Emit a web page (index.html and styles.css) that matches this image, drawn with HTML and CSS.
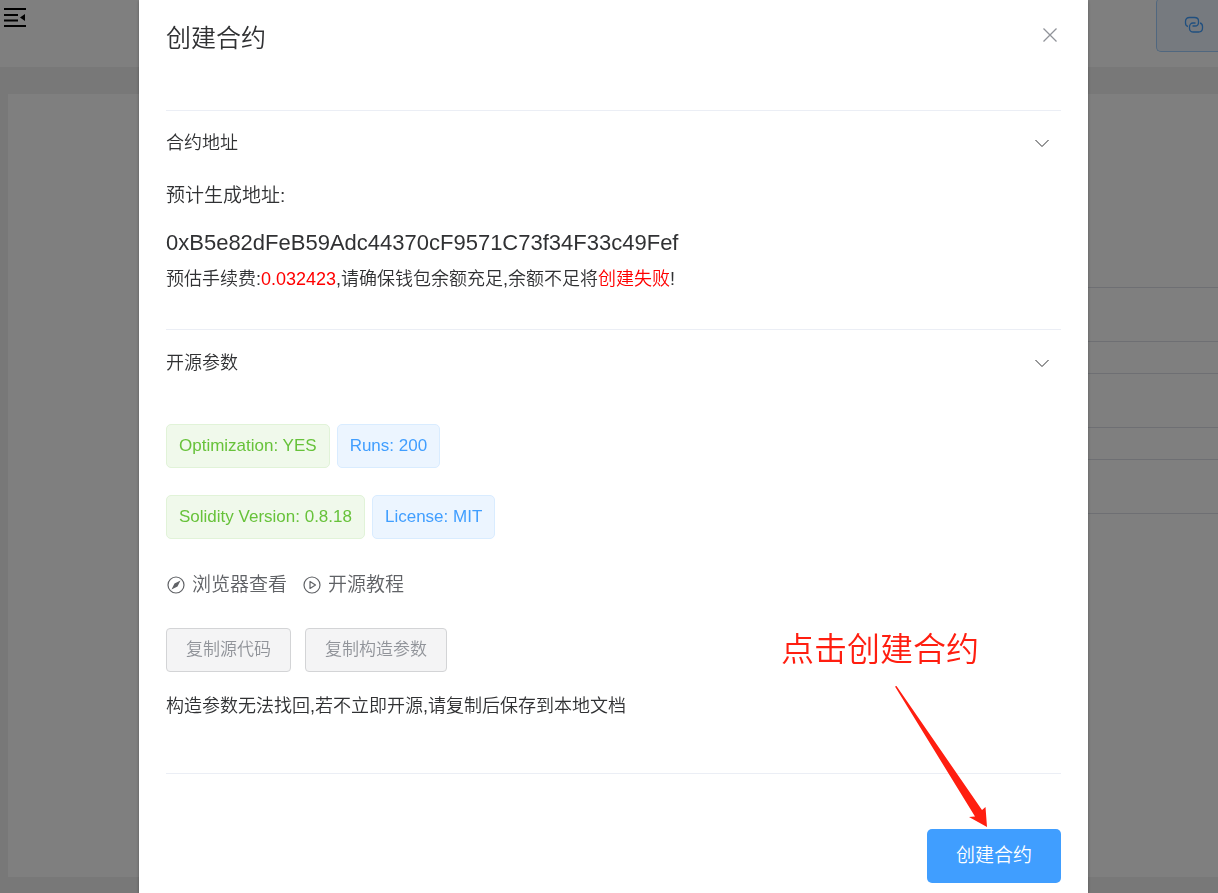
FILE: index.html
```
<!DOCTYPE html>
<html lang="zh-CN">
<head>
    <meta charset="UTF-8">
    <meta name="viewport" content="width=device-width, initial-scale=1.0">
    <title>创建合约</title>
    <link rel="stylesheet" href="styles.css">
</head>
<body>
    <!-- Page behind the dialog -->
    <header class="top-bar">
        <button class="menu-toggle" type="button" aria-label="菜单">
            <svg width="24" height="20" viewBox="0 0 24 20">
                <path d="M1 1h22M1 7h14M1 12.500h14M1 18h22" stroke="#000" stroke-width="2" fill="none"/>
                <path d="M22 6v7l-5-3.500z" fill="#000"/>
            </svg>
        </button>
        <button class="wallet-btn" type="button" aria-label="连接钱包">
            <svg width="20" height="18" viewBox="0 0 20 18" fill="none" stroke="#409eff" stroke-width="1.300">
                <path d="M4 10.500C2 10 1.500 8.500 1.500 7V5.500C1.500 3 3 1.500 5.500 1.500h5C13 1.500 14.500 3 14.500 5v1.500C14.500 9 13 10 11 10H8.500"/>
                <path d="M16 7c2 .5 2.500 2 2.500 3.500V12c0 2.500-1.500 4-4 4h-5C7 16 5.500 14.500 5.500 12.500V11c0-2.500 1.500-4 3.500-4h2.500"/>
            </svg>
        </button>
    </header>
    <main class="content">
        <div class="card">
            <div class="row"></div>
            <div class="row"></div>
            <div class="row"></div>
        </div>
    </main>

    <!-- Create contract dialog -->
    <div class="overlay">
        <div class="dialog" role="dialog" aria-labelledby="dialogTitle">
            <div class="dialog-header">
                <h2 class="dialog-title" id="dialogTitle">创建合约</h2>
                <button class="close-btn" type="button" aria-label="关闭">
                    <svg width="16" height="16" viewBox="0 0 16 16">
                        <path d="M1.500 1.500l13 13M14.500 1.500l-13 13" stroke="#909399" stroke-width="1.300" fill="none"/>
                    </svg>
                </button>
            </div>

            <section class="panel address-panel">
                <button class="panel-header" type="button">
                    合约地址
                    <svg width="16" height="10" viewBox="0 0 16 10">
                        <path d="M1.500 2L8 8.500 14.500 2" stroke="#303133" stroke-width="1" fill="none"/>
                    </svg>
                </button>
                <p class="address-label">预计生成地址:</p>
                <p class="address">0xB5e82dFeB59Adc44370cF9571C73f34F33c49Fef</p>
                <p class="note">预估手续费:<span class="red">0.032423</span>,请确保钱包余额充足,余额不足将<span class="red">创建失败</span>!</p>
            </section>

            <section class="panel source-panel">
                <button class="panel-header" type="button">
                    开源参数
                    <svg width="16" height="10" viewBox="0 0 16 10">
                        <path d="M1.500 2L8 8.500 14.500 2" stroke="#303133" stroke-width="1" fill="none"/>
                    </svg>
                </button>
                <div class="tags">
                    <span class="tag success">Optimization: YES</span>
                    <span class="tag">Runs: 200</span>
                </div>
                <div class="tags">
                    <span class="tag success">Solidity Version: 0.8.18</span>
                    <span class="tag">License: MIT</span>
                </div>
                <div class="links">
                    <a href="#">
                        <svg width="20" height="20" viewBox="0 0 20 20">
                            <circle cx="10" cy="10" r="8" stroke="#606266" stroke-width="1.200" fill="none"/>
                            <path d="M14.500 5.500l-3 6-6 3 3-6z" fill="#606266"/>
                        </svg>
                        浏览器查看
                    </a>
                    <a href="#">
                        <svg width="20" height="20" viewBox="0 0 20 20" stroke="#606266" stroke-width="1.200" fill="none">
                            <circle cx="10" cy="10" r="8"/>
                            <path d="M8 6.500v7l5.500-3.500z" stroke-linejoin="round"/>
                        </svg>
                        开源教程
                    </a>
                </div>
                <div class="copy-buttons">
                    <button class="copy-btn" type="button" disabled>复制源代码</button>
                    <button class="copy-btn" type="button" disabled>复制构造参数</button>
                </div>
                <p class="note">构造参数无法找回,若不立即开源,请复制后保存到本地文档</p>
            </section>

            <div class="dialog-footer">
                <button class="create-btn" type="button">创建合约</button>
                <div class="hint">
                    <span>点击创建合约</span>
                    <svg width="94" height="142" viewBox="0 0 94 142">
                        <path d="M0 0.500L1.500 0 87 124 90.500 121 92 141 74 131 80 130.500z" fill="#ff1e10"/>
                    </svg>
                </div>
            </div>
        </div>
    </div>
</body>
</html>
```
FILE: styles.css
```
* {
    margin: 0;
    padding: 0;
    box-sizing: border-box;
}

body {
    display: flex;
    flex-direction: column;
    height: 100vh;
    overflow: hidden;
    background-color: #f0f0f0;
    color: #303133;
    font-family: "Liberation Sans", "Noto Sans CJK SC", sans-serif;
    font-size: 18px;
    font-weight: 350;
    line-height: 24px;
}

button {
    border: none;
    background: none;
    color: inherit;
    font: inherit;
    cursor: pointer;
}

svg {
    display: block;
    flex-shrink: 0;
}

/* Page behind the dialog */
.top-bar {
    display: flex;
    justify-content: space-between;
    align-items: flex-start;
    height: 67px;
    background-color: #fff;
}

.menu-toggle {
    padding: 8px 3px;
}

.wallet-btn {
    width: 62px;
    height: 54px;
    margin-top: -2px;
    padding-left: 27px;
    background-color: #ecf5ff;
    border: 1px solid #a0cfff;
    border-right: none;
    border-radius: 5px 0 0 5px;
}

.content {
    display: flex;
    flex: 1;
    padding: 27px 0 16px 8px;
}

.card {
    flex: 1;
    padding: 193px 0 0 200px;
    background-color: #fff;
}

.row {
    height: 55px;
    margin-bottom: 31px;
    border: 1px solid #dcdfe6;
    border-right: none;
}

/* Dialog */
.overlay {
    position: fixed;
    inset: 0;
    display: flex;
    padding: 0 130px 0 139px;
    background-color: rgba(0, 0, 0, 0.5);
}

.dialog {
    flex: 1;
    padding: 0 27px;
    background-color: #fff;
    box-shadow: 0 1px 3px rgba(0, 0, 0, 0.3);
}

.dialog-header {
    display: flex;
    justify-content: space-between;
    align-items: flex-start;
    height: 110px;
    padding-top: 22px;
}

.dialog-title {
    font-size: 25px;
    font-weight: 350;
    line-height: 32px;
}

.close-btn {
    padding: 5px 3px;
}

.panel {
    border-top: 1px solid #ebeef5;
}

.panel-header {
    display: flex;
    justify-content: space-between;
    align-items: center;
    width: 100%;
    height: 64px;
    padding-right: 11px;
}

.address-panel {
    padding-bottom: 38px;
}

.address-label {
    padding: 9px 0 11px;
    font-size: 19px;
}

.address {
    padding: 8px 0;
    font-size: 22px;
    font-weight: 400;
    line-height: 32px;
}

.red {
    color: #f00;
}

.source-panel {
    padding-bottom: 55px;
    border-bottom: 1px solid #ebeef5;
}

.source-panel .panel-header {
    height: 66px;
    margin-bottom: 28px;
}

.tags {
    display: flex;
    gap: 7px;
    margin-bottom: 27px;
}

.tag {
    height: 44px;
    padding: 0 12px;
    background-color: #ecf5ff;
    border: 1px solid #d9ecff;
    border-radius: 5px;
    color: #409eff;
    font-size: 17px;
    line-height: 42px;
}

.tag.success {
    background-color: #f0f9eb;
    border-color: #e1f3d8;
    color: #67c23a;
}

.links {
    display: flex;
    gap: 15px;
    margin: 34px 0 31px;
}

.links a {
    display: flex;
    align-items: center;
    gap: 6px;
    color: #606266;
    font-size: 19px;
    text-decoration: none;
}

.copy-buttons {
    display: flex;
    gap: 14px;
    margin-bottom: 22px;
}

.copy-btn {
    height: 44px;
    padding: 0 19px;
    background-color: #f4f4f5;
    border: 1px solid #d3d4d6;
    border-radius: 4px;
    color: #909399;
    font-size: 17px;
    cursor: not-allowed;
}

.dialog-footer {
    position: relative;
    display: flex;
    justify-content: flex-end;
    padding-top: 55px;
}

.create-btn {
    height: 54px;
    padding: 0 29px;
    background-color: #409eff;
    border-radius: 5px;
    color: #fff;
    font-size: 19px;
}

/* Red hint pointing at the create button */
.hint {
    position: absolute;
    right: 82px;
    bottom: 55px;
    display: flex;
    flex-direction: column;
    color: #ff1e10;
    font-size: 33px;
    line-height: 40px;
    pointer-events: none;
}

.hint svg {
    align-self: flex-end;
    margin: 16px -10px 0 0;
}
```
